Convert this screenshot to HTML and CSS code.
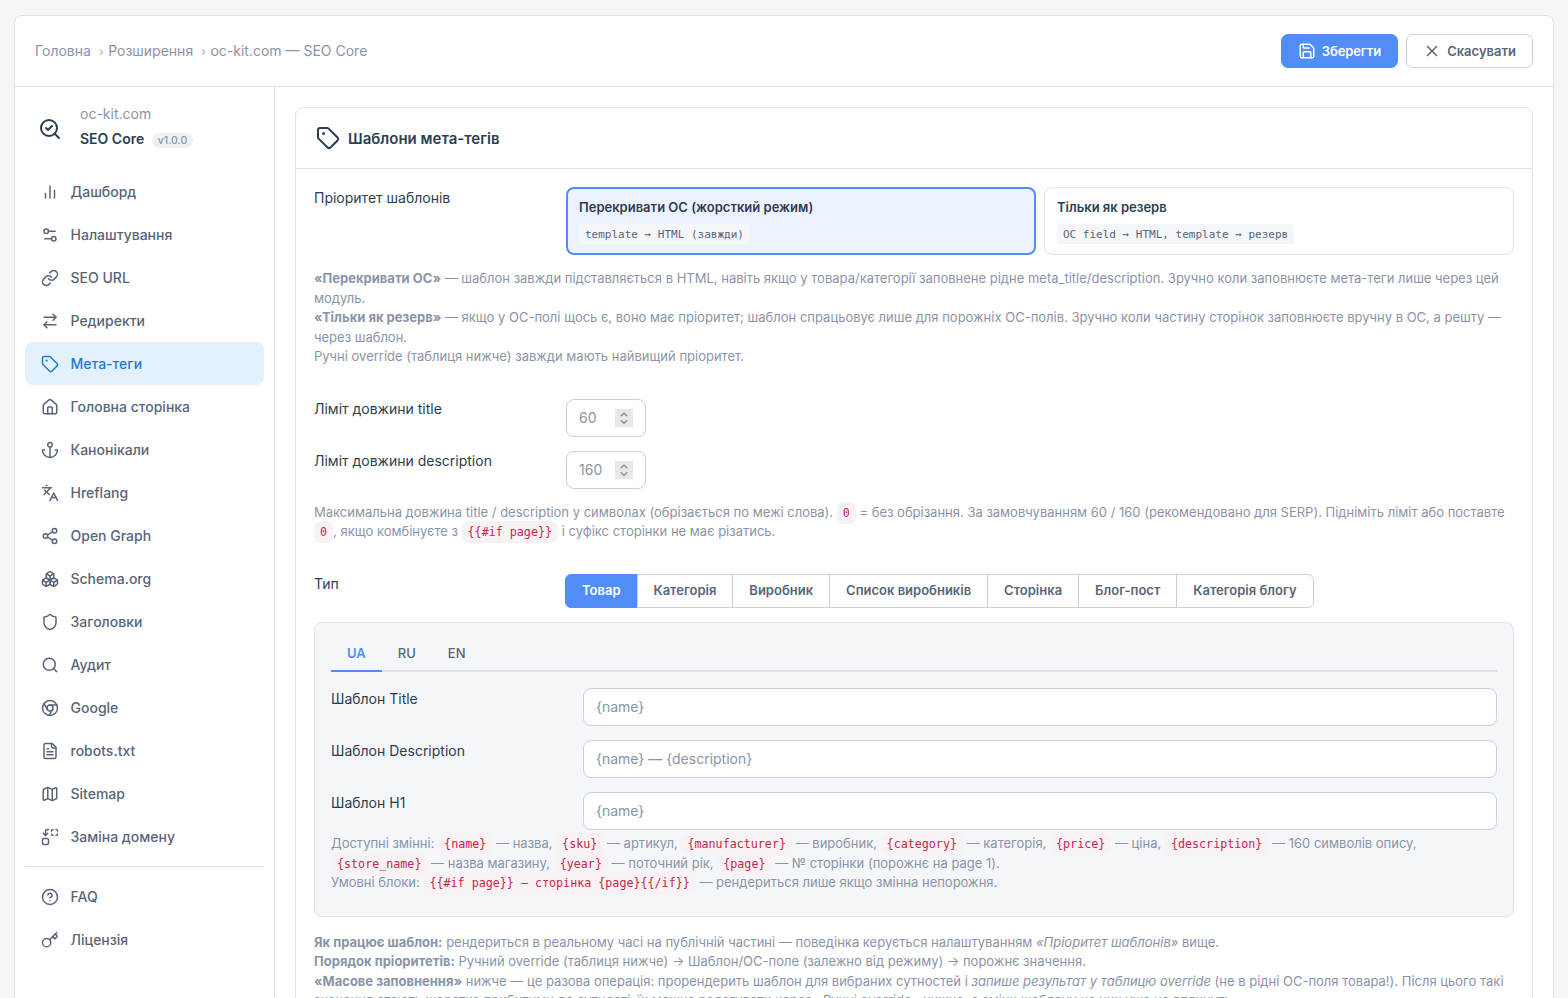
FILE: index.html
```html
<!doctype html>
<html lang="uk">

<head>
    <meta charset="UTF-8" />
    <meta name="viewport" content="width=device-width, initial-scale=1.0" />
    <title>oc-kit.com — SEO Core</title>
    <link rel="stylesheet" href="styles.css">
</head>

<body>
    <div class="app">
        <header class="topbar">
            <nav class="breadcrumb">
                <a>Головна</a>
                <a>Розширення</a>
                <a>oc-kit.com — SEO Core</a>
            </nav>
            <div class="actions">
                <button class="btn btn-primary">
                    <svg class="icon" viewBox="0 0 24 24"><path d="M15.2 3a2 2 0 0 1 1.4.6l3.8 3.8a2 2 0 0 1 .6 1.4V19a2 2 0 0 1-2 2H5a2 2 0 0 1-2-2V5a2 2 0 0 1 2-2z"/><path d="M17 21v-7a1 1 0 0 0-1-1H8a1 1 0 0 0-1 1v7"/><path d="M7 3v4a1 1 0 0 0 1 1h7"/></svg>
                    Зберегти
                </button>
                <button class="btn">
                    <svg class="icon" viewBox="0 0 24 24"><path d="M18 6 6 18"/><path d="m6 6 12 12"/></svg>
                    Скасувати
                </button>
            </div>
        </header>

        <div class="layout">
            <aside class="sidebar">
                <div class="brand">
                    <svg class="icon icon-lg" viewBox="0 0 24 24"><path d="m8 11 2 2 4-4"/><circle cx="11" cy="11" r="8"/><path d="m21 21-4.3-4.3"/></svg>
                    <div class="brand-text">
                        <div class="brand-site">oc-kit.com</div>
                        <div class="brand-name">SEO Core <span class="version">v1.0.0</span></div>
                    </div>
                </div>

                <nav class="menu">
                    <a class="menu-item">
                        <svg class="icon" viewBox="0 0 24 24"><path d="M18 20V10"/><path d="M12 20V4"/><path d="M6 20v-6"/></svg>
                        Дашборд
                    </a>
                    <a class="menu-item">
                        <svg class="icon" viewBox="0 0 24 24"><path d="M14 17H5"/><path d="M19 7h-9"/><circle cx="17" cy="17" r="3"/><circle cx="7" cy="7" r="3"/></svg>
                        Налаштування
                    </a>
                    <a class="menu-item">
                        <svg class="icon" viewBox="0 0 24 24"><path d="M10 13a5 5 0 0 0 7.54.54l3-3a5 5 0 0 0-7.07-7.07l-1.72 1.71"/><path d="M14 11a5 5 0 0 0-7.54-.54l-3 3a5 5 0 0 0 7.07 7.07l1.71-1.71"/></svg>
                        SEO URL
                    </a>
                    <a class="menu-item">
                        <svg class="icon" viewBox="0 0 24 24"><path d="m16 3 4 4-4 4"/><path d="M20 7H4"/><path d="m8 21-4-4 4-4"/><path d="M4 17h16"/></svg>
                        Редиректи
                    </a>
                    <a class="menu-item active">
                        <svg class="icon" viewBox="0 0 24 24"><path d="M12.586 2.586A2 2 0 0 0 11.172 2H4a2 2 0 0 0-2 2v7.172a2 2 0 0 0 .586 1.414l8.704 8.704a2.426 2.426 0 0 0 3.42 0l6.58-6.58a2.426 2.426 0 0 0 0-3.42z"/><circle cx="7.5" cy="7.5" r=".5" fill="currentColor"/></svg>
                        Мета-теги
                    </a>
                    <a class="menu-item">
                        <svg class="icon" viewBox="0 0 24 24"><path d="M15 21v-8a1 1 0 0 0-1-1h-4a1 1 0 0 0-1 1v8"/><path d="M3 10a2 2 0 0 1 .709-1.528l7-5.999a2 2 0 0 1 2.582 0l7 5.999A2 2 0 0 1 21 10v9a2 2 0 0 1-2 2H5a2 2 0 0 1-2-2z"/></svg>
                        Головна сторінка
                    </a>
                    <a class="menu-item">
                        <svg class="icon" viewBox="0 0 24 24"><path d="M12 22V8"/><path d="M5 12H2a10 10 0 0 0 20 0h-3"/><circle cx="12" cy="5" r="3"/></svg>
                        Канонікали
                    </a>
                    <a class="menu-item">
                        <svg class="icon" viewBox="0 0 24 24"><path d="m5 8 6 6"/><path d="m4 14 6-6 2-3"/><path d="M2 5h12"/><path d="M7 2h1"/><path d="m22 22-5-10-5 10"/><path d="M14 18h6"/></svg>
                        Hreflang
                    </a>
                    <a class="menu-item">
                        <svg class="icon" viewBox="0 0 24 24"><circle cx="18" cy="5" r="3"/><circle cx="6" cy="12" r="3"/><circle cx="18" cy="19" r="3"/><path d="m8.59 13.51 6.83 3.98"/><path d="m15.41 6.51-6.82 3.98"/></svg>
                        Open Graph
                    </a>
                    <a class="menu-item">
                        <svg class="icon" viewBox="0 0 24 24"><path d="M2.97 12.92A2 2 0 0 0 2 14.63v3.24a2 2 0 0 0 .97 1.71l3 1.8a2 2 0 0 0 2.06 0L12 19v-5.5l-5-3-4.03 2.42Z"/><path d="m7 16.5-4.74-2.85"/><path d="m7 16.5 5-3"/><path d="M7 16.5v5.17"/><path d="M12 13.5V19l3.97 2.38a2 2 0 0 0 2.06 0l3-1.8a2 2 0 0 0 .97-1.71v-3.24a2 2 0 0 0-.97-1.71L17 10.5l-5 3Z"/><path d="m17 16.5-5-3"/><path d="m17 16.5 4.74-2.85"/><path d="M17 16.5v5.17"/><path d="M7.97 4.42A2 2 0 0 0 7 6.13v4.37l5 3 5-3V6.13a2 2 0 0 0-.97-1.71l-3-1.8a2 2 0 0 0-2.06 0l-3 1.8Z"/><path d="M12 8 7.26 5.15"/><path d="m12 8 4.74-2.85"/><path d="M12 13.5V8"/></svg>
                        Schema.org
                    </a>
                    <a class="menu-item">
                        <svg class="icon" viewBox="0 0 24 24"><path d="M20 13c0 5-3.5 7.5-7.66 8.95a1 1 0 0 1-.67-.01C7.5 20.5 4 18 4 13V6a1 1 0 0 1 1-1c2 0 4.5-1.2 6.24-2.72a1.17 1.17 0 0 1 1.52 0C14.51 3.81 17 5 19 5a1 1 0 0 1 1 1z"/></svg>
                        Заголовки
                    </a>
                    <a class="menu-item">
                        <svg class="icon" viewBox="0 0 24 24"><circle cx="11" cy="11" r="8"/><path d="m21 21-4.3-4.3"/></svg>
                        Аудит
                    </a>
                    <a class="menu-item">
                        <svg class="icon" viewBox="0 0 24 24"><circle cx="12" cy="12" r="10"/><circle cx="12" cy="12" r="4"/><path d="M21.17 8H12"/><path d="M3.95 6.06 8.54 14"/><path d="M10.88 21.94 15.46 14"/></svg>
                        Google
                    </a>
                    <a class="menu-item">
                        <svg class="icon" viewBox="0 0 24 24"><path d="M15 2H6a2 2 0 0 0-2 2v16a2 2 0 0 0 2 2h12a2 2 0 0 0 2-2V7Z"/><path d="M14 2v4a2 2 0 0 0 2 2h4"/><path d="M10 9H8"/><path d="M16 13H8"/><path d="M16 17H8"/></svg>
                        robots.txt
                    </a>
                    <a class="menu-item">
                        <svg class="icon" viewBox="0 0 24 24"><path d="M14.106 5.553a2 2 0 0 0 1.788 0l3.659-1.83A1 1 0 0 1 21 4.619v12.764a1 1 0 0 1-.553.894l-4.553 2.277a2 2 0 0 1-1.788 0l-4.212-2.106a2 2 0 0 0-1.788 0l-3.659 1.83A1 1 0 0 1 3 19.381V6.618a1 1 0 0 1 .553-.894l4.553-2.277a2 2 0 0 1 1.788 0z"/><path d="M15 5.764v15"/><path d="M9 3.236v15"/></svg>
                        Sitemap
                    </a>
                    <a class="menu-item">
                        <svg class="icon" viewBox="0 0 24 24"><path d="M14 4a2 2 0 0 1 2-2"/><path d="M16 10a2 2 0 0 1-2-2"/><path d="M20 2a2 2 0 0 1 2 2"/><path d="M22 8a2 2 0 0 1-2 2"/><path d="m3 7 3 3 3-3"/><path d="M6 10V5a3 3 0 0 1 3-3h1"/><rect x="2" y="14" width="8" height="8" rx="2"/></svg>
                        Заміна домену
                    </a>
                    <hr>
                    <a class="menu-item">
                        <svg class="icon" viewBox="0 0 24 24"><circle cx="12" cy="12" r="10"/><path d="M9.09 9a3 3 0 0 1 5.83 1c0 2-3 3-3 3"/><path d="M12 17h.01"/></svg>
                        FAQ
                    </a>
                    <a class="menu-item">
                        <svg class="icon" viewBox="0 0 24 24"><path d="m15.5 7.5 2.3 2.3a1 1 0 0 0 1.4 0l2.1-2.1a1 1 0 0 0 0-1.4L19 4"/><path d="m21 2-9.6 9.6"/><circle cx="7.5" cy="15.5" r="5.5"/></svg>
                        Ліцензія
                    </a>
                </nav>
            </aside>

            <main class="content">
                <section class="card">
                    <h2 class="card-header">
                        <svg class="icon icon-lg" viewBox="0 0 24 24"><path d="M12.586 2.586A2 2 0 0 0 11.172 2H4a2 2 0 0 0-2 2v7.172a2 2 0 0 0 .586 1.414l8.704 8.704a2.426 2.426 0 0 0 3.42 0l6.58-6.58a2.426 2.426 0 0 0 0-3.42z"/><circle cx="7.5" cy="7.5" r=".5" fill="currentColor"/></svg>
                        <span>Шаблони мета-тегів</span>
                    </h2>
                    <div class="card-body">
                        <div class="row">
                            <label>Пріоритет шаблонів</label>
                            <div class="options">
                                <div class="option selected">
                                    <strong>Перекривати ОС (жорсткий режим)</strong>
                                    <code>template → HTML (завжди)</code>
                                </div>
                                <div class="option">
                                    <strong>Тільки як резерв</strong>
                                    <code>OC field → HTML, template → резерв</code>
                                </div>
                            </div>
                        </div>
                        <p class="hint hint-priority">
                            <b>«Перекривати ОС»</b> — шаблон завжди підставляється в HTML, навіть якщо у товара/категорії заповнене рідне meta_title/description. Зручно коли заповнюєте мета-теги лише через цей модуль.<br>
                            <b>«Тільки як резерв»</b> — якщо у ОС-полі щось є, воно має пріоритет; шаблон спрацьовує лише для порожніх ОС-полів. Зручно коли частину сторінок заповнюєте вручну в ОС, а решту — через шаблон.<br>
                            Ручні override (таблиця нижче) завжди мають найвищий пріоритет.
                        </p>

                        <div class="row row-tight">
                            <label for="limit-title">Ліміт довжини title</label>
                            <div class="input input-number">
                                <input id="limit-title" type="number" value="60">
                                <svg class="spinner" viewBox="0 0 18 18"><path d="m5.7 7.3 3.3-3 3.3 3"/><path d="m5.7 11.2 3.3 3 3.3-3"/></svg>
                            </div>
                        </div>
                        <div class="row row-tight">
                            <label for="limit-desc">Ліміт довжини description</label>
                            <div class="input input-number">
                                <input id="limit-desc" type="number" value="160">
                                <svg class="spinner" viewBox="0 0 18 18"><path d="m5.7 7.3 3.3-3 3.3 3"/><path d="m5.7 11.2 3.3 3 3.3-3"/></svg>
                            </div>
                        </div>
                        <p class="hint hint-limit">
                            Максимальна довжина title / description у символах (обрізається по межі слова). <code>0</code> = без обрізання. За замовчуванням 60 / 160 (рекомендовано для SERP). Підніміть ліміт або поставте <code>0</code>, якщо комбінуєте з <code>{{#if page}}</code> і суфікс сторінки не має різатись.
                        </p>

                        <div class="row row-tight">
                            <label>Тип</label>
                            <div class="segmented">
                                <button class="active">Товар</button>
                                <button>Категорія</button>
                                <button>Виробник</button>
                                <button>Список виробників</button>
                                <button>Сторінка</button>
                                <button>Блог-пост</button>
                                <button>Категорія блогу</button>
                            </div>
                        </div>

                        <div class="panel">
                            <div class="tabs">
                                <a class="active">UA</a>
                                <a>RU</a>
                                <a>EN</a>
                            </div>
                            <div class="row">
                                <label for="tpl-title">Шаблон Title</label>
                                <input class="input" id="tpl-title" type="text" value="{name}">
                            </div>
                            <div class="row">
                                <label for="tpl-desc">Шаблон Description</label>
                                <input class="input" id="tpl-desc" type="text" value="{name} — {description}">
                            </div>
                            <div class="row">
                                <label for="tpl-h1">Шаблон H1</label>
                                <input class="input" id="tpl-h1" type="text" value="{name}">
                            </div>
                            <p class="hint hint-vars">
                                Доступні змінні: <code>{name}</code> — назва, <code>{sku}</code> — артикул, <code>{manufacturer}</code> — виробник, <code>{category}</code> — категорія, <code>{price}</code> — ціна, <code>{description}</code> — 160 символів опису, <code>{store_name}</code> — назва магазину, <code>{year}</code> — поточний рік, <code>{page}</code> — № сторінки (порожнє на page 1).<br>
                                Умовні блоки: <code>{{#if page}} — сторінка {page}{{/if}}</code> — рендериться лише якщо змінна непорожня.
                            </p>
                        </div>

                        <p class="hint hint-about">
                            <b>Як працює шаблон:</b> рендериться в реальному часі на публічній частині — поведінка керується налаштуванням <i>«Пріоритет шаблонів»</i> вище.<br>
                            <b>Порядок пріоритетів:</b> Ручний override (таблиця нижче) → Шаблон/ОС-поле (залежно від режиму) → порожнє значення.<br>
                            <b>«Масове заповнення»</b> нижче — це разова операція: прорендерить шаблон для вибраних сутностей і <i>запише результат у таблицю override</i> (не в рідні ОС-поля товара!). Після цього такі значення стають жорстко прибитими до сутності, їх можна редагувати через «Ручні override» нижче, а зміни шаблону на них уже не вплинуть.
                        </p>
                    </div>
                </section>
            </main>
        </div>
    </div>
</body>

</html>
```
FILE: styles.css
```css
* {
    box-sizing: border-box;
}

body {
    margin: 0;
    padding: 15px 14px 0;
    height: 998px;
    overflow: hidden;
    background: #f5f5f5;
    color: #2c3e50;
    font-family: Inter, "Liberation Sans", sans-serif;
    font-size: 14px;
    line-height: 1.5;
}

button,
input {
    font-family: inherit;
}

.app {
    background: #fff;
    border: 1px solid #dee2ea;
    border-radius: 8px;
}

.icon {
    width: 18px;
    height: 18px;
    flex: none;
    fill: none;
    stroke: currentColor;
    stroke-width: 2;
    stroke-linecap: round;
    stroke-linejoin: round;
}

.icon-lg {
    width: 24px;
    height: 24px;
}

/* top bar */
.topbar {
    display: flex;
    align-items: center;
    justify-content: space-between;
    height: 71px;
    padding: 0 20px;
    border-bottom: 1px solid #dee2ea;
}

.breadcrumb {
    display: flex;
    padding-bottom: 2px;
    color: #8a94a8;
}

.breadcrumb a + a::before {
    content: "›";
    padding: 0 4.6px 0 8px;
    color: #a5adbc;
    font-size: 12px;
}

.actions {
    display: flex;
    gap: 8px;
}

.btn {
    display: flex;
    align-items: center;
    gap: 6px;
    height: 34px;
    padding: 0 16px;
    border: 1px solid #c8d0dd;
    border-radius: 7px;
    background: #fff;
    color: #596579;
    font-size: 13px;
    font-weight: 600;
}

.btn-primary {
    background: #508df6;
    border-color: #508df6;
    color: #fff;
    letter-spacing: -0.1px;
}

/* sidebar */
.layout {
    display: flex;
}

.sidebar {
    width: 260px;
    flex: none;
    padding: 15px 10px;
    border-right: 1px solid #dee2ea;
}

.brand {
    display: flex;
    align-items: center;
    gap: 18px;
    height: 54px;
    margin-bottom: 14px;
    padding-left: 13px;
}

.brand-text {
    padding-bottom: 2px;
}

.brand-site {
    line-height: 24px;
    color: #8a94a8;
}

.brand-name {
    line-height: 26px;
    font-weight: 600;
}

.version {
    margin-left: 4px;
    padding: 1px 6px;
    border-radius: 8px;
    background: #eef0f6;
    color: #8a94a8;
    font-size: 10.5px;
    font-weight: 500;
}

.menu-item {
    display: flex;
    align-items: center;
    gap: 11.5px;
    height: 43px;
    padding: 0 16px;
    border-radius: 8px;
    color: #596579;
    font-weight: 500;
}

.menu-item.active {
    background: #e3f1fd;
    color: #1c7cd6;
}

.menu hr {
    margin: 8px 0;
    border: 0;
    border-top: 1px solid #dae3ed;
}

/* card */
.content {
    flex: 1;
    min-width: 0;
    padding: 20px;
}

.card {
    border: 1px solid #dee2ea;
    border-radius: 8px;
}

.card-header {
    display: flex;
    align-items: center;
    gap: 8px;
    height: 61px;
    margin: 0;
    padding: 0 20px;
    border-bottom: 1px solid #dee2ea;
    font-size: 15px;
    font-weight: 600;
}

.card-header span {
    padding-top: 2px;
}

.card-body {
    padding: 18px;
}

.row {
    display: flex;
    align-items: flex-start;
    margin-bottom: 14px;
}

.row label {
    width: 252px;
    flex: none;
}

.row-tight label {
    line-height: 20.8px;
}

.options {
    display: flex;
    flex: 1;
    gap: 8px;
}

.option {
    flex: 1;
    height: 68px;
    padding: 10px 12px;
    border: 1px solid #dee2ea;
    border-radius: 8px;
}

.option.selected {
    padding: 9px 11px;
    border: 2px solid #508df6;
    background: #ecf2fe;
}

.option strong {
    display: block;
    margin-bottom: 6px;
    font-size: 13px;
    font-weight: 600;
    line-height: 19.5px;
}

.option code {
    display: table;
    padding: 3px 6px 1px;
    border-radius: 4px;
    background: #f4f6fa;
    color: #596579;
    font-family: "DejaVu Sans Mono", monospace;
    font-size: 11px;
    line-height: 16px;
}

.input {
    flex: 1;
    height: 38px;
    padding: 0 12px 1px;
    border: 1px solid #c8d0dd;
    border-radius: 8px;
    background: #fff;
    color: #8a94a8;
    font-size: 14px;
}

.input-number {
    display: flex;
    align-items: center;
    flex: none;
    width: 80px;
    padding-bottom: 0;
}

.input-number input {
    width: 36px;
    padding: 0;
    border: 0;
    background: none;
    color: inherit;
    font-size: inherit;
    appearance: textfield;
}

.input-number input::-webkit-inner-spin-button {
    display: none;
}

.spinner {
    width: 18px;
    height: 18px;
    flex: none;
    background: #e8e8ec;
    fill: none;
    stroke: #8e8e95;
    stroke-width: 1.4;
}

.hint {
    margin: 0;
    color: #8a94a8;
    font-size: 13px;
    line-height: 19.5px;
}

.hint code {
    padding: 4px 6px;
    border-radius: 6px;
    background: #f9f2f4;
    color: #c7254e;
    font-family: "DejaVu Sans Mono", monospace;
    font-size: 11.7px;
    line-height: 1;
}

.hint-priority,
.hint-limit {
    margin-bottom: 32px;
}

.hint-vars {
    margin-top: -10px;
}

.hint-about {
    margin-top: 16px;
}

.segmented {
    display: flex;
    margin-left: -1px;
}

.segmented button {
    height: 34px;
    margin-left: -1px;
    padding: 0 16px 1px;
    border: 1px solid #c8d0dd;
    background: #fff;
    color: #596579;
    font-size: 13px;
    font-weight: 600;
}

.segmented button:first-child {
    margin-left: 0;
    border-radius: 6px 0 0 6px;
}

.segmented button:last-child {
    border-radius: 0 6px 6px 0;
}

.segmented button.active {
    background: #508df6;
    border-color: #508df6;
    color: #fff;
}

.panel {
    margin-top: 14.5px;
    padding: 16px 16px 23px;
    border: 1px solid #dee2ea;
    border-radius: 8px;
    background: #f4f6fa;
}

.row:has(+ .panel) {
    margin-bottom: 0;
}

.tabs {
    display: flex;
    height: 33px;
    margin-bottom: 16px;
    border-bottom: 2px solid #dee3ea;
}

.tabs a {
    height: 33px;
    padding: 5px 16px 0;
    border-bottom: 2px solid transparent;
    color: #596579;
    font-size: 13px;
    font-weight: 500;
}

.tabs a.active {
    border-color: #508df6;
    color: #508df6;
    font-weight: 600;
}
```
